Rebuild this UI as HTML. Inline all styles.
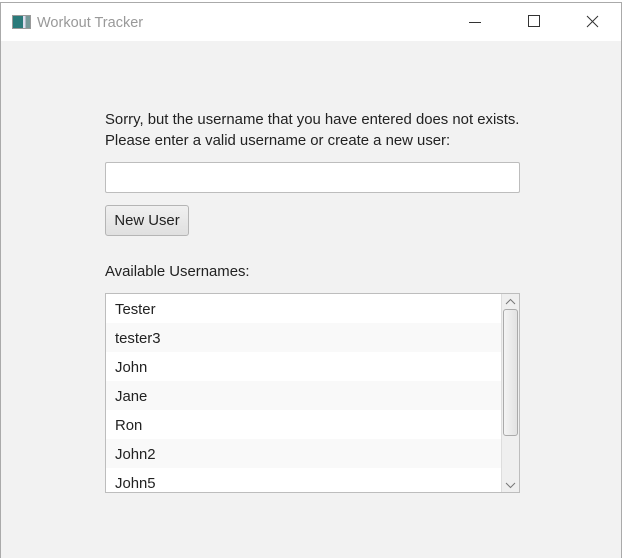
<!DOCTYPE html>
<html><head><style>
body{margin:0;width:623px;height:558px;overflow:hidden;background:#fff;font-family:"Liberation Sans",sans-serif;position:relative}
.win{position:absolute;left:0;top:2px;width:622px;height:556px;border:1px solid #aaa;border-bottom:none;box-sizing:border-box;background:#f2f2f2}
.title{position:absolute;left:0;top:0;width:100%;height:38px;background:#fff}
.t{position:absolute;font-size:14.9px;color:#222}
.list{position:absolute;left:105px;top:293px;width:415px;height:200px;border:1px solid #bdbdbd;box-sizing:border-box;background:#fff;overflow:hidden}
.row{height:29px;line-height:33px;padding-left:9px;font-size:14.9px;color:#222;box-sizing:border-box}
.row:nth-child(even){background:#f9f9f9}
</style></head><body>
<div class="win">
<div class="title">
<div style="position:absolute;left:11px;top:12px;width:17px;height:12px;border:1px solid #999;background:linear-gradient(90deg,#2a7a7a 0 60%,#dde 60% 75%,#799 75%)"></div>
<div style="position:absolute;left:36px;top:12px;font-size:14.5px;color:#999">Workout Tracker</div>
<div style="position:absolute;left:468px;top:19px;width:12px;height:1px;background:#333"></div>
<div style="position:absolute;left:527px;top:12px;width:10px;height:10px;border:1px solid #333"></div>
<svg style="position:absolute;left:585px;top:12px" width="13" height="13"><path d="M1 1L12 12M12 1L1 12" stroke="#333" stroke-width="1"/></svg>
</div>
</div>
<div class="t" style="left:105px;top:112px">Sorry, but the username that you have entered does not exists.</div>
<div class="t" style="left:105px;top:133px">Please enter a valid username or create a new user:</div>
<div style="position:absolute;left:105px;top:162px;width:415px;height:31px;border:1px solid #bdbdbd;box-sizing:border-box;background:#fff;border-radius:2px"></div>
<div style="position:absolute;left:105px;top:205px;width:84px;height:31px;border:1px solid #b5b5b5;box-sizing:border-box;border-radius:3px;background:linear-gradient(#f0f0f0,#e0e0e0);font-size:14.9px;color:#222;text-align:center;line-height:31px">New User</div>
<div class="t" style="left:105px;top:264px">Available Usernames:</div>
<div class="list">
<div class="row">Tester</div><div class="row">tester3</div><div class="row">John</div><div class="row">Jane</div><div class="row">Ron</div><div class="row">John2</div><div class="row">John5</div>
<div style="position:absolute;right:0;top:0;width:17px;height:198px;background:#efefef;border-left:1px solid #ddd">
<svg style="position:absolute;left:3px;top:4px" width="11" height="7"><path d="M1 6L5.5 1.5L10 6" fill="none" stroke="#777"/></svg>
<div style="position:absolute;left:1px;top:15px;width:13px;height:125px;border:1px solid #aaa;border-radius:3px;background:linear-gradient(90deg,#f4f4f4,#e2e2e2)"></div>
<svg style="position:absolute;left:3px;top:188px" width="11" height="7"><path d="M1 1L5.5 5.5L10 1" fill="none" stroke="#777"/></svg>
</div>
</div>
</body></html>
